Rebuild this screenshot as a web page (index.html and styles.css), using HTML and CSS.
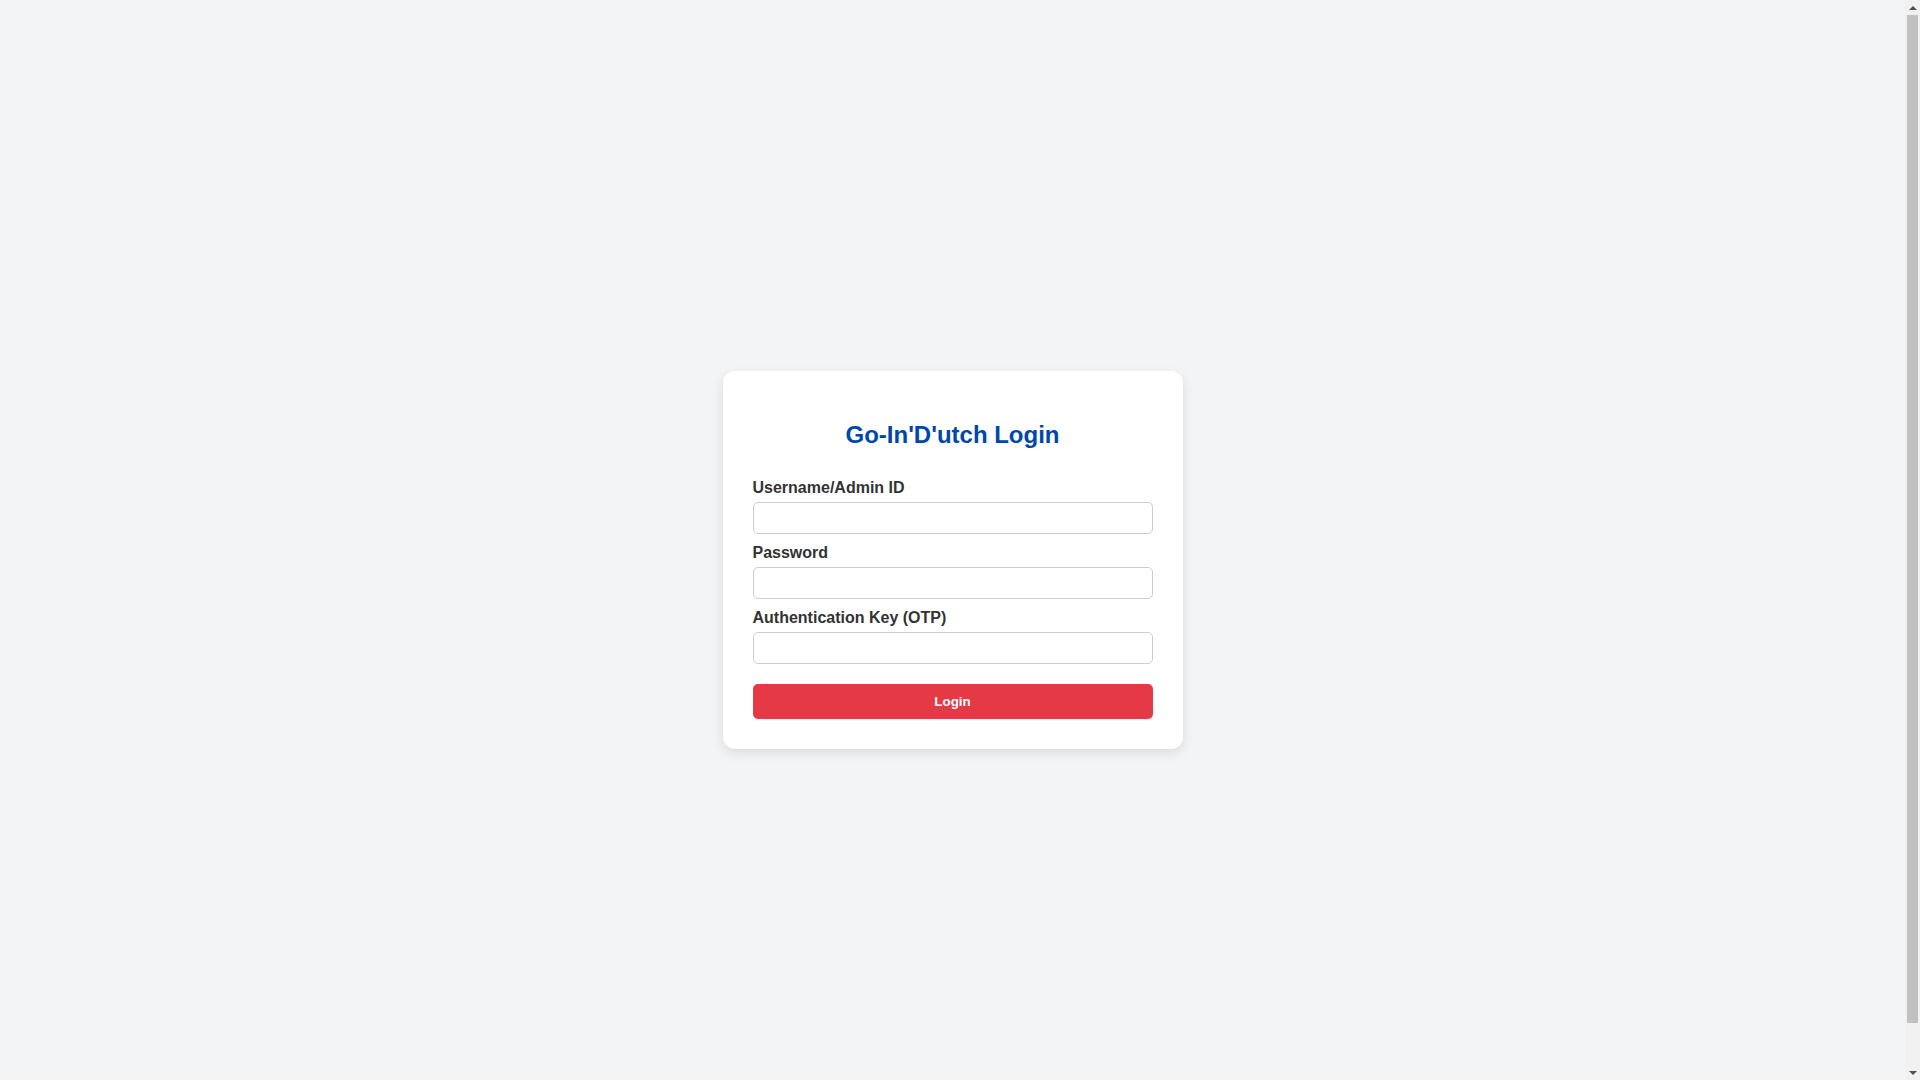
FILE: index.html
```html
<!DOCTYPE html>
<html lang="en">
<head>
<meta charset="utf-8">
<title>Go-In'D'utch Login</title>
<link rel="stylesheet" href="styles.css">
</head>
<body>
<div class="login-card">
  <h2 class="title">Go-In'D'utch Login</h2>
  <form class="login-form">
    <label class="field-label" for="user">Username/Admin ID</label>
    <input class="field-input" id="user" type="text">
    <label class="field-label" for="pass">Password</label>
    <input class="field-input" id="pass" type="password">
    <label class="field-label" for="otp">Authentication Key (OTP)</label>
    <input class="field-input" id="otp" type="text">
    <button class="login-btn" type="button">Login</button>
  </form>
</div>
<div class="fake-scrollbar" aria-hidden="true">
  <div class="sb-arrow sb-up"></div>
  <div class="sb-thumb"></div>
  <div class="sb-arrow sb-down"></div>
</div>
</body>
</html>
```

FILE: styles.css
```css
html, body {
  margin: 0;
}
body {
  padding: 20px 35px 20px 20px;
  height: 100vh;
  background: #f3f4f6;
  font-family: "Liberation Sans", Arial, sans-serif;
  display: flex;
  justify-content: center;
  align-items: center;
}
.login-card {
  width: 400px;
  padding: 30px;
  background: #ffffff;
  border-radius: 12px;
  box-shadow: 0 4px 12px rgba(0, 0, 0, 0.1);
}
.title {
  margin: 20px 0 30px;
  font-size: 24px;
  font-weight: bold;
  color: #0047ab;
  text-align: center;
}
.login-form {
  margin: 0;
}
.field-label {
  display: block;
  margin-bottom: 5px;
  font-size: 16px;
  font-weight: bold;
  color: #333333;
}
.field-input {
  display: block;
  box-sizing: border-box;
  width: 100%;
  height: 32px;
  margin: 0 0 10px;
  padding: 8px;
  border: 1px solid #cccccc;
  border-radius: 5px;
  background: #ffffff;
  font-family: "Liberation Sans", Arial, sans-serif;
  font-size: 13.33px;
}
.login-btn {
  display: block;
  width: 100%;
  margin-top: 20px;
  padding: 10px;
  border: none;
  border-radius: 5px;
  background: #e63946;
  color: #ffffff;
  font-family: "Liberation Sans", Arial, sans-serif;
  font-size: 13.33px;
  font-weight: bold;
  line-height: 15px;
}
.fake-scrollbar {
  position: fixed;
  top: 0;
  right: 0;
  bottom: 0;
  width: 15px;
  background: #f1f1f1;
  display: flex;
  flex-direction: column;
  align-items: center;
}
.sb-arrow {
  flex: 0 0 15px;
  width: 15px;
  display: flex;
  align-items: center;
  justify-content: center;
}
.sb-up::before,
.sb-down::before {
  content: "";
  width: 0;
  height: 0;
  border-left: 4px solid transparent;
  border-right: 4px solid transparent;
}
.sb-up::before {
  border-bottom: 4px solid #505050;
}
.sb-down::before {
  border-top: 4px solid #505050;
}
.sb-thumb {
  flex: 1;
  width: 11px;
  margin: 0 0 42px;
  background: #c1c1c1;
}
```
